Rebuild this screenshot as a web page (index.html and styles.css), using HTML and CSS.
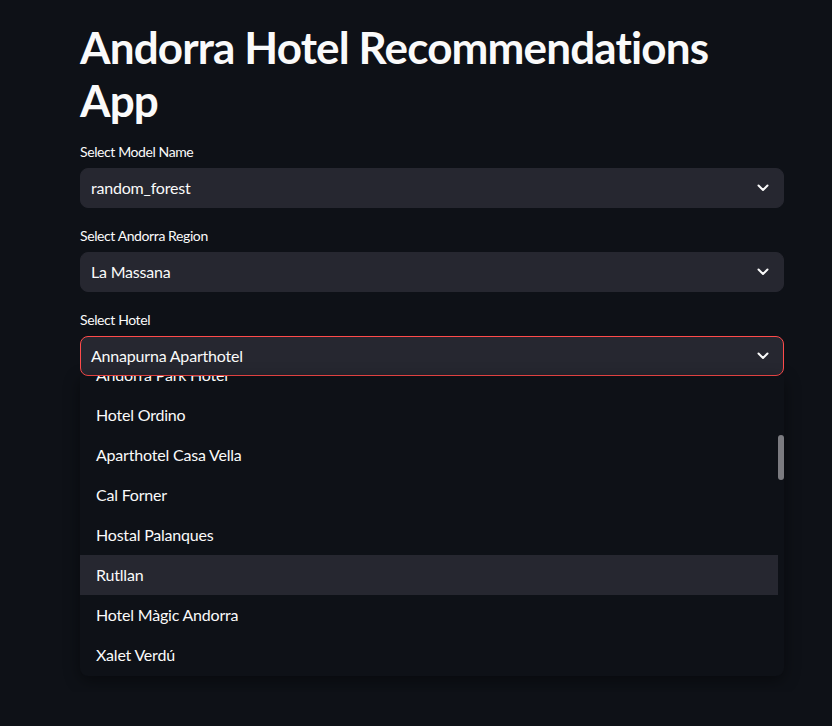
FILE: index.html
```html
<!DOCTYPE html>
<html lang="en">
<head>
<meta charset="utf-8">
<title>Andorra Hotel Recommendations App</title>
<link rel="stylesheet" href="styles.css">
</head>
<body>
<main class="main">
  <h1 class="title">Andorra Hotel Recommendations App</h1>

  <div class="field">
    <label class="label">Select Model Name</label>
    <div class="select">
      <span class="value">random_forest</span>
      <svg class="chev" width="12" height="8" viewBox="0 0 12 8"><path d="M1.5 1.5 L6 6 L10.5 1.5" fill="none" stroke="#fafafa" stroke-width="2" stroke-linecap="round" stroke-linejoin="round"/></svg>
    </div>
  </div>

  <div class="field">
    <label class="label">Select Andorra Region</label>
    <div class="select">
      <span class="value">La Massana</span>
      <svg class="chev" width="12" height="8" viewBox="0 0 12 8"><path d="M1.5 1.5 L6 6 L10.5 1.5" fill="none" stroke="#fafafa" stroke-width="2" stroke-linecap="round" stroke-linejoin="round"/></svg>
    </div>
  </div>

  <div class="field">
    <label class="label">Select Hotel</label>
    <div class="select select-focus">
      <span class="value">Annapurna Aparthotel</span>
      <svg class="chev" width="12" height="8" viewBox="0 0 12 8"><path d="M1.5 1.5 L6 6 L10.5 1.5" fill="none" stroke="#fafafa" stroke-width="2" stroke-linecap="round" stroke-linejoin="round"/></svg>
    </div>
    <div class="menu">
      <div class="options">
        <div class="opt opt-clipped">Andorra Park Hotel</div>
        <div class="opt">Hotel Ordino</div>
        <div class="opt">Aparthotel Casa Vella</div>
        <div class="opt">Cal Forner</div>
        <div class="opt">Hostal Palanques</div>
        <div class="opt opt-hover">Rutllan</div>
        <div class="opt">Hotel Màgic Andorra</div>
        <div class="opt">Xalet Verdú</div>
      </div>
      <div class="track"><div class="thumb"></div></div>
    </div>
  </div>
</main>
</body>
</html>
```

FILE: styles.css
```css
html, body {
  margin: 0;
  padding: 0;
  background: #0e1117;
  color: #fafafa;
  font-family: "Lato", "Liberation Sans", sans-serif;
}

.main {
  width: 704px;
  padding: 21px 0 0 80px;
}

.title {
  margin: 0 0 13px 0;
  font-size: 44px;
  font-weight: 700;
  line-height: 52.8px;
  letter-spacing: -0.85px;
}

.field {
  display: flex;
  flex-direction: column;
  margin-bottom: 16px;
}

.label {
  font-size: 14px;
  line-height: 24px;
  margin-bottom: 4px;
  letter-spacing: -0.4px;
}

.select {
  height: 40px;
  box-sizing: border-box;
  background: #262730;
  border: 1px solid #262730;
  border-radius: 8px;
  display: flex;
  align-items: center;
  justify-content: space-between;
  padding: 0 14px 0 10px;
}

.select-focus {
  border-color: #ff4b4b;
}

.value {
  font-size: 16px;
  letter-spacing: -0.2px;
}

.chev {
  display: block;
}

.menu {
  height: 300px;
  background: #0e1117;
  border-radius: 0 0 8px 8px;
  box-shadow: 0 4px 16px rgba(0, 0, 0, 0.45);
  overflow: hidden;
  display: flex;
  position: relative;
}

.options {
  flex: 1;
  display: flex;
  flex-direction: column;
}

.opt {
  flex: 0 0 40px;
  display: flex;
  align-items: center;
  padding-left: 16px;
  font-size: 16px;
  letter-spacing: -0.2px;
}

.opt-clipped {
  margin-top: -21px;
}

.opt-hover {
  background: #262730;
}

.track {
  width: 6px;
  display: flex;
  flex-direction: column;
  padding-top: 59px;
}

.thumb {
  height: 45px;
  border-radius: 3px;
  background: #7b7b80;
}
```
